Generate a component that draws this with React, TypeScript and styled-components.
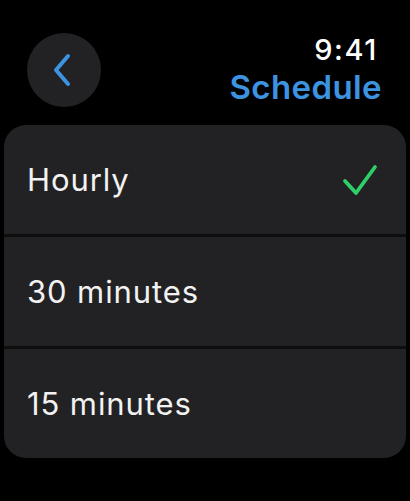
import React from "react";
import styled, { createGlobalStyle } from "styled-components";

const Global = createGlobalStyle`
  html, body { margin: 0; padding: 0; background: #000; }
  body { width: 410px; height: 501px; overflow: hidden; font-family: Inter, "Liberation Sans", sans-serif; }
`;

const Screen = styled.div`
  width: 410px;
  height: 501px;
  background: #000;
  display: flex;
  flex-direction: column;
  box-sizing: border-box;
  padding: 33px 4px 0 4px;
`;

const Header = styled.div`
  display: flex;
  justify-content: space-between;
  align-items: flex-start;
  padding: 0 24px 0 23px;
  height: 92px;
`;

const BackButton = styled.button`
  width: 74px;
  height: 74px;
  border-radius: 50%;
  background: #222224;
  border: none;
  display: flex;
  align-items: center;
  justify-content: center;
  padding: 0;
  padding-right: 4px;
`;

const TitleBlock = styled.div`
  display: flex;
  flex-direction: column;
  align-items: flex-end;
`;

const Time = styled.div`
  color: #fff;
  font-size: 29px;
  font-weight: 500;
  line-height: 34px;
  margin-right: 4px;
  letter-spacing: 1.6px;
`;

const Title = styled.div`
  color: #3c93e0;
  font-size: 33px;
  font-weight: 600;
  line-height: 40px;
  letter-spacing: 0.4px;
`;

const Card = styled.div`
  background: #222224;
  border-radius: 22px;
  display: flex;
  flex-direction: column;
  overflow: hidden;
`;

const Row = styled.div`
  height: 109px;
  display: flex;
  align-items: center;
  justify-content: space-between;
  padding: 0 28px 0 23px;
  & + & {
    border-top: 3px solid #0e0e0f;
  }
`;

const Label = styled.span`
  color: #f2f2f2;
  font-size: 31px;
  font-weight: 400;
  letter-spacing: 0.9px;
`;

const Check = () => (
  <svg width="36" height="34" viewBox="0 0 36 34" fill="none">
    <path d="M3 18 L14 30 L33 4" stroke="#2fcf68" strokeWidth="3.8" strokeLinecap="round" strokeLinejoin="round" />
  </svg>
);

const Chevron = () => (
  <svg width="22" height="34" viewBox="0 0 22 34" fill="none">
    <path d="M17 3 L5 17 L17 31" stroke="#3c93e0" strokeWidth="4" strokeLinecap="round" strokeLinejoin="round" />
  </svg>
);

const options = [
  { label: "Hourly", selected: true },
  { label: "30 minutes", selected: false },
  { label: "15 minutes", selected: false },
];

export default function App() {
  return (
    <>
      <Global />
      <Screen>
        <Header>
          <BackButton aria-label="Back">
            <Chevron />
          </BackButton>
          <TitleBlock>
            <Time>9:41</Time>
            <Title>Schedule</Title>
          </TitleBlock>
        </Header>
        <Card>
          {options.map((o) => (
            <Row key={o.label}>
              <Label>{o.label}</Label>
              {o.selected && <Check />}
            </Row>
          ))}
        </Card>
      </Screen>
    </>
  );
}
